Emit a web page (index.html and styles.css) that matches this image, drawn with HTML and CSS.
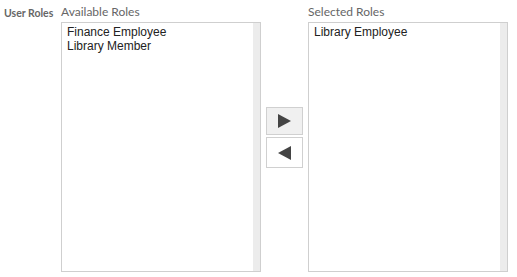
FILE: index.html
```html
<!DOCTYPE html>
<html>
<head>
<meta charset="utf-8">
<link rel="stylesheet" href="styles.css">
</head>
<body>
<div class="field">
  <div class="field-label">User Roles</div>
  <div class="list-col">
    <div class="list-title">Available Roles</div>
    <div class="list-box">
      <div class="list-items">
        <div class="item">Finance Employee</div>
        <div class="item">Library Member</div>
      </div>
      <div class="scrollbar"></div>
    </div>
  </div>
  <div class="mover">
    <button class="move-btn active" type="button" aria-label="Add">
      <svg width="13" height="14" viewBox="0 0 13 14"><polygon points="0,0 13,7 0,14" fill="#444"/></svg>
    </button>
    <button class="move-btn" type="button" aria-label="Remove">
      <svg width="13" height="14" viewBox="0 0 13 14"><polygon points="13,0 0,7 13,14" fill="#444"/></svg>
    </button>
  </div>
  <div class="list-col">
    <div class="list-title">Selected Roles</div>
    <div class="list-box">
      <div class="list-items">
        <div class="item">Library Employee</div>
      </div>
      <div class="scrollbar"></div>
    </div>
  </div>
</div>
</body>
</html>
```
FILE: styles.css
```css
html, body {
  margin: 0;
  padding: 0;
  background: #fff;
}
.field {
  display: flex;
  align-items: flex-start;
  padding: 3px 0 0 4px;
}
.field-label {
  width: 57px;
  padding-top: 4px;
  font-family: Lato, "Liberation Sans", sans-serif;
  font-weight: bold;
  font-size: 10.5px;
  line-height: 12px;
  color: #666;
}
.list-col {
  width: 200px;
  display: flex;
  flex-direction: column;
}
.list-title {
  font-family: Lato, "Liberation Sans", sans-serif;
  font-size: 12px;
  line-height: 17px;
  color: #666;
  margin-bottom: 2px;
}
.list-box {
  height: 250px;
  box-sizing: border-box;
  border: 1px solid #cfcfcf;
  display: flex;
  background: #fff;
}
.list-items {
  flex: 1;
  padding: 2px 0 0 5px;
  font-family: "Liberation Sans", Arial, sans-serif;
  font-size: 12px;
  line-height: 14px;
  color: #222;
}
.scrollbar {
  width: 7px;
  background: #ececec;
}
.mover {
  margin: 104px 5px 0 5px;
  display: flex;
  flex-direction: column;
  gap: 2px;
}
.move-btn {
  width: 37px;
  height: 29px;
  box-sizing: border-box;
  border: 1px solid #d0d0d0;
  background: #fff;
  padding: 0;
  margin: 0;
  display: flex;
  align-items: center;
  justify-content: center;
}
.move-btn.active {
  background: #f0f0f0;
  height: 28px;
}
.move-btn:last-child {
  height: 31px;
}
```
